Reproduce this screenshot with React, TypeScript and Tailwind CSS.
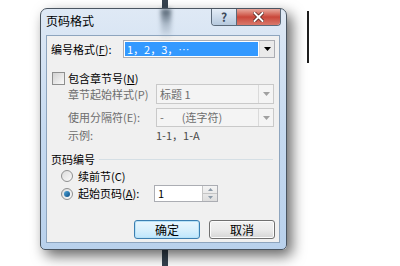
const font = { fontFamily: '"Noto Sans CJK SC", "Liberation Sans", sans-serif' };

function Arrow({ disabled }: { disabled?: boolean }) {
  return (
    <svg width="7" height="4" viewBox="0 0 7 4">
      <path d="M0 0h7L3.5 4z" fill={disabled ? '#a0a0a0' : '#000'} />
    </svg>
  );
}

function Combo({ children, disabled, h }: { children: React.ReactNode; disabled?: boolean; h: string }) {
  return (
    <div
      className={`flex w-[118px] ${h} border ${
        disabled ? 'border-[#c9c9c9] bg-[#f4f4f4] text-[#6d6d6d]' : 'border-[#abadb3] bg-white'
      }`}
    >
      <div className="flex flex-1 items-center pl-[3px]">{children}</div>
      <div className="flex w-[15px] items-center justify-center border-l border-[#dadada] bg-[#f4f4f4]">
        <Arrow disabled={disabled} />
      </div>
    </div>
  );
}

function Radio({ checked }: { checked?: boolean }) {
  return (
    <div className="flex h-[12px] w-[12px] items-center justify-center rounded-full border border-[#8e8f8f] bg-gradient-to-br from-[#dcdcdc] to-[#fbfbfb]">
      {checked && (
        <div className="h-[6px] w-[6px] rounded-full bg-gradient-to-br from-[#4fa6d9] to-[#0b4f86]" />
      )}
    </div>
  );
}

export default function App() {
  return (
    <div className="relative h-[266px] w-[400px] overflow-hidden bg-white" style={font}>
      {/* dark bar behind the dialog */}
      <div className="absolute left-[162px] top-0 h-[266px] w-[6px] bg-[#35424f]" />
      {/* text cursor */}
      <div className="absolute left-[307px] top-[11px] h-[52px] w-[2px] bg-[#1e1e1e]" />

      <div className="relative pl-[40px] pt-[8px]">
        <div className="relative flex h-[242px] w-[247px] flex-col rounded-t-[7px] rounded-b-[5px] border border-[#4a5561] bg-gradient-to-b from-[#dfe9f5] via-[#c6daf0] to-[#b9d1ec] pb-[6px] pl-[5px] pr-[6px] pt-[26px] shadow-[5px_6px_14px_rgba(0,0,0,0.6)]">
          {/* blurred bar seen through glass title */}
          <div className="absolute left-[120px] top-0 h-[30px] w-[10px] bg-gradient-to-b from-[#4c5b6a] via-[#8c9cac]/60 to-transparent blur-[2px]" />

          {/* title */}
          <div className="absolute left-[5px] top-[4px] text-[12px] leading-[16px] text-black">页码格式</div>

          {/* caption buttons */}
          <div className="absolute right-[5px] top-0 flex h-[17px] overflow-hidden rounded-b-[4px] border border-t-0 border-[#5b6a7a]">
            <div className="flex w-[25px] items-center justify-center border-r border-[#5b6a7a] bg-gradient-to-b from-[#e4edf7] to-[#b6c9de] text-[12px] font-bold leading-none text-[#3b4a5b]">
              ?
            </div>
            <div className="flex w-[43px] items-center justify-center bg-gradient-to-b from-[#e7a99f] via-[#c9463a] to-[#d9786b]">
              <svg width="11" height="10" viewBox="0 0 11 10">
                <path d="M1.5 1l8 8M9.5 1l-8 8" stroke="#4a1a14" strokeWidth="3.4" strokeLinecap="square" />
                <path d="M1.5 1l8 8M9.5 1l-8 8" stroke="#fff" strokeWidth="2" strokeLinecap="square" />
              </svg>
            </div>
          </div>

          {/* client area */}
          <div className="flex flex-1 flex-col border border-[#8ea5be] bg-[#f0f0f0] pl-[4px] pt-[4px] text-[11px] leading-none text-black">
            <div className="flex h-[18px] items-center">
              <span className="w-[72px]">
                编号格式(<span className="underline">F</span>):
              </span>
              <div className="flex h-[18px] w-[152px] border border-[#abadb3] bg-white">
                <div className="m-[1px] flex flex-1 items-center bg-[#3399ff] pl-[2px] text-white">
                  1，2，3，<span className="font-['Liberation_Sans',sans-serif]">···</span>
                </div>
                <div className="flex w-[15px] items-center justify-center border-l border-[#dadada] bg-[#eaeaea]">
                  <Arrow />
                </div>
              </div>
            </div>

            <div className="mt-[14px] flex h-[12px] items-center">
              <div className="ml-[1px] h-[13px] w-[13px] border border-[#8e8f8f] bg-gradient-to-br from-[#d2d2d2] to-[#fafafa]" />
              <span className="ml-[3px]">
                包含章节号(<span className="underline">N</span>)
              </span>
            </div>

            <div className="flex h-[20px] items-center text-[#6d6d6d]">
              <span className="ml-[17px] w-[88px]">章节起始样式(P)</span>
              <Combo disabled h="h-[20px]">标题 1</Combo>
            </div>

            <div className="mt-[4px] flex h-[19px] items-center text-[#6d6d6d]">
              <span className="ml-[17px] w-[88px]">使用分隔符(E):</span>
              <Combo disabled h="h-[19px]">
                -<span className="ml-[18px]">(连字符)</span>
              </Combo>
            </div>

            <div className="flex h-[16px] items-center text-[#6d6d6d]">
              <span className="ml-[17px] w-[88px]">示例:</span>
              <span className="text-[#4a4a4a]">1-1，1-A</span>
            </div>

            <div className="mt-[8px] flex h-[16px] items-center">
              <span>页码编号</span>
              <div className="ml-[4px] mr-[6px] h-0 flex-1 border-t border-[#d5dfe5]" />
            </div>

            <div className="mt-[1px] flex h-[16px] items-center">
              <div className="ml-[10px]">
                <Radio />
              </div>
              <span className="ml-[5px]">续前节(C)</span>
            </div>

            <div className="mt-[1px] flex h-[17px] items-center">
              <div className="ml-[10px]">
                <Radio checked />
              </div>
              <span className="ml-[5px] w-[76px]">
                起始页码(<span className="underline">A</span>):
              </span>
              <div className="flex h-[17px] w-[64px] border border-[#abadb3] bg-white">
                <div className="flex flex-1 items-center pl-[3px]">1</div>
                <div className="flex w-[15px] flex-col border-l border-[#c5c5c5] bg-gradient-to-b from-[#f4f4f4] to-[#dedede]">
                  <div className="flex flex-1 items-center justify-center">
                    <svg width="5" height="3" viewBox="0 0 5 3">
                      <path d="M0 3h5L2.5 0z" fill="#8c9aa8" />
                    </svg>
                  </div>
                  <div className="flex flex-1 items-center justify-center border-t border-[#c5c5c5]">
                    <svg width="5" height="3" viewBox="0 0 5 3">
                      <path d="M0 0h5L2.5 3z" fill="#8c9aa8" />
                    </svg>
                  </div>
                </div>
              </div>
            </div>

            <div className="mt-[18px] flex h-[19px] gap-[9px] pl-[83px] text-[12px]">
              <button className="flex w-[66px] items-center justify-center rounded-[3px] border border-[#3c7fb1] bg-gradient-to-b from-[#eaf6fd] via-[#d9f0fc] to-[#bee6fd] shadow-[inset_0_0_0_1px_#b8e2f7]">
                确定
              </button>
              <button className="flex w-[66px] items-center justify-center rounded-[3px] border border-[#707070] bg-gradient-to-b from-[#f2f2f2] via-[#ebebeb] to-[#d6d6d6] shadow-[inset_0_0_0_1px_#fcfcfc]">
                取消
              </button>
            </div>
          </div>
        </div>
      </div>
    </div>
  );
}
